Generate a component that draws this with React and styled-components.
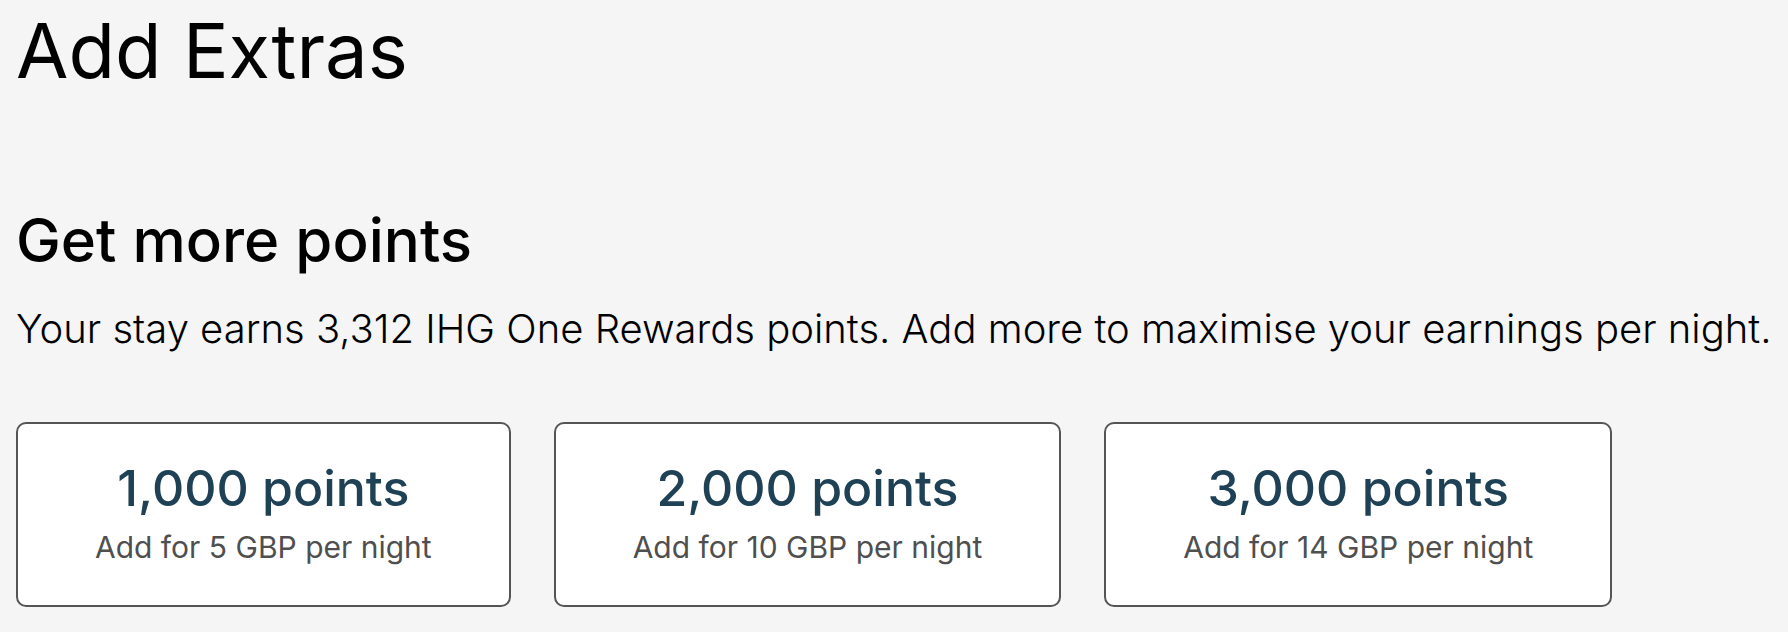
import React from 'react';
import styled, { createGlobalStyle } from 'styled-components';

const GlobalStyle = createGlobalStyle`
    html, body {
        margin: 0;
        padding: 0;
        background: #f5f5f5;
    }
    body {
        font-family: Inter, "Noto Sans", sans-serif;
        color: #000;
    }
`;

const Page = styled.main`
    padding: 5px 16px 0;
`;

const Title = styled.h1`
    margin: 0;
    font-size: 76px;
    font-weight: 400;
    line-height: 1.2;
`;

const Section = styled.section`
    margin-top: 108px;
`;

const Heading = styled.h2`
    margin: 0;
    font-size: 60px;
    font-weight: 500;
    line-height: 1.2;
`;

const Intro = styled.p`
    margin: 27px 0 0;
    font-size: 40px;
    font-weight: 300;
    line-height: 1.3;
    white-space: nowrap;
`;

const Options = styled.div`
    display: flex;
    gap: 43px;
    margin-top: 67px;
`;

const Option = styled.button`
    display: flex;
    flex-direction: column;
    align-items: center;
    height: 185px;
    padding: 34px 77px 40px;
    background: #fff;
    border: 2px solid #555;
    border-radius: 10px;
    font-family: inherit;
    cursor: pointer;
`;

const Points = styled.span`
    font-size: 50px;
    font-weight: 500;
    color: #1f4155;
    line-height: 1.2;
`;

const Price = styled.span`
    margin-top: 11px;
    font-size: 30px;
    font-weight: 400;
    color: #4f4f4f;
    line-height: 1.2;
`;

const offers = [
    { points: '1,000', price: 5 },
    { points: '2,000', price: 10 },
    { points: '3,000', price: 14 },
];

export default function App() {
    return (
        <Page>
            <GlobalStyle />
            <Title>Add Extras</Title>
            <Section>
                <Heading>Get more points</Heading>
                <Intro>
                    Your stay earns 3,312 IHG One Rewards points. Add more to maximise your earnings per night.
                </Intro>
                {/* Point bundles */}
                <Options>
                    {offers.map(o => (
                        <Option key={o.points} type="button">
                            <Points>{o.points} points</Points>
                            <Price>Add for {o.price} GBP per night</Price>
                        </Option>
                    ))}
                </Options>
            </Section>
        </Page>
    );
}
